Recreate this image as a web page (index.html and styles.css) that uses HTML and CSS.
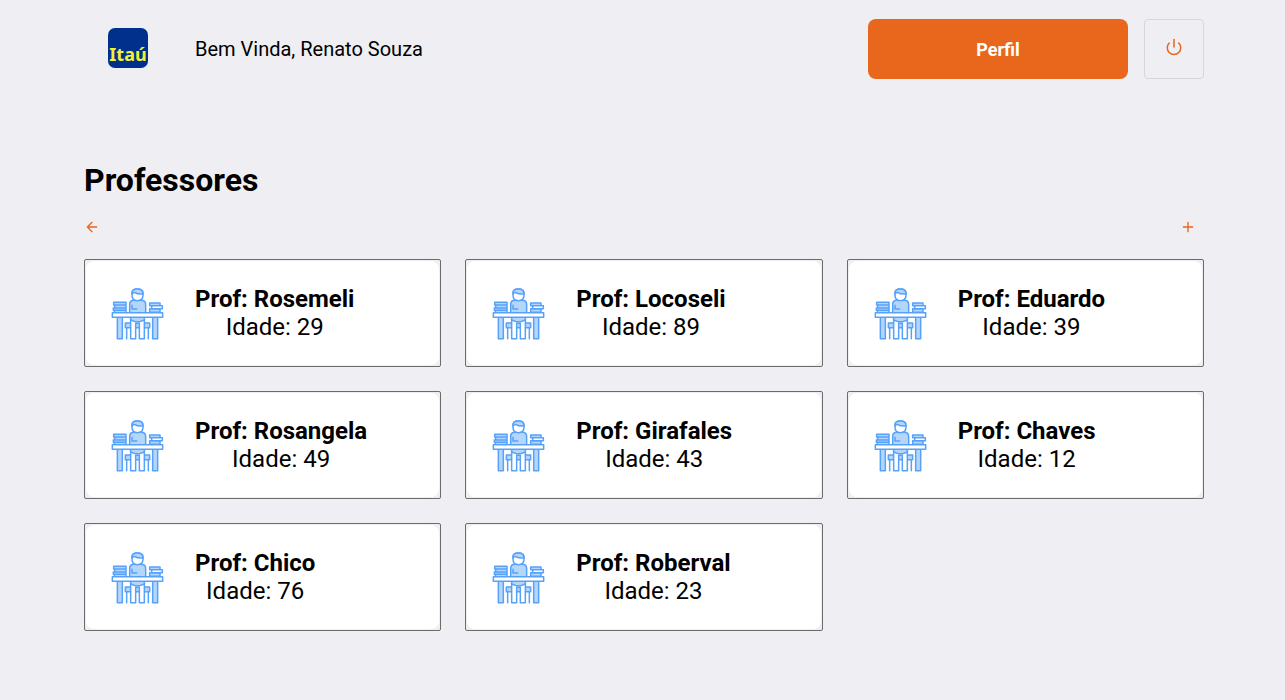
FILE: index.html
```html
<!DOCTYPE html>
<html lang="pt-BR">
<head>
<meta charset="utf-8">
<meta name="viewport" content="width=device-width, initial-scale=1">
<title>Professores</title>
<link rel="stylesheet" href="styles.css">
</head>
<body>
<svg class="sprite" aria-hidden="true">
  <symbol id="desk" viewBox="18 18 162 162">
    <g stroke="#56a2fb" stroke-width="4.5" stroke-linejoin="round" stroke-linecap="round" fill="#b5d6fb">
      <path d="M77 98V74Q77 61 90 61H112Q125 61 125 74V98Z"/>
      <path d="M84 76V87H98" fill="none"/>
      <path d="M84 40Q83 27 100 27Q117 27 117 40V46Q117 62 100 62Q84 62 84 46Z" fill="#fff"/>
      <path d="M84 39Q84 27 100 27Q117 27 117 42Q100 43 93 38Q88 37 84 42Z"/>
      <path d="M29 67H66V75H29ZM32 75H66V84H32ZM28 84H66V91H28ZM31 91H66V98H31Z"/>
      <path d="M137 69H168V77H137ZM137 86H168V97H137Z"/>
      <path d="M143 77H175V86H143Z" fill="#fff"/>
      <path d="M40 111H55V176H40ZM146 111H161V176H146Z"/>
      <path d="M64 129H137V143H64Z"/>
      <path d="M68 143V176M133 143V176" fill="none"/>
      <path d="M80 111H121V176H106V130H95V176H80Z" fill="#fff"/>
      <path d="M80 111H121V120L108 125H93L80 120Z"/>
      <path d="M25 98H176V112H25Z" fill="#fff"/>
    </g>
  </symbol>
</svg>
<div class="page">
  <header class="header">
    <svg class="logo" viewBox="0 0 40 40" role="img" aria-label="Itaú">
      <rect width="40" height="40" rx="7" fill="#00308c"/>
      <text class="logo-text" x="20" y="33" text-anchor="middle">Itaú</text>
    </svg>
    <span class="welcome">Bem Vinda, Renato Souza</span>
    <button class="profile" type="button">Perfil</button>
    <button class="power" type="button" aria-label="Sair">
      <svg width="18" height="18" viewBox="0 0 24 24" class="line-icon"><path d="M18.36 6.64a9 9 0 1 1-12.73 0M12 2v10"/></svg>
    </button>
  </header>
  <main>
    <h1 class="title">Professores</h1>
    <nav class="toolbar">
      <a class="tool" href="#voltar" aria-label="Voltar"><svg width="16" height="16" viewBox="0 0 24 24" class="line-icon"><path d="M19 12H5M12 19l-7-7 7-7"/></svg></a>
      <a class="tool tool-add" href="#novo" aria-label="Adicionar"><svg width="16" height="16" viewBox="0 0 24 24" class="line-icon"><path d="M12 5v14M5 12h14"/></svg></a>
    </nav>
    <div class="grid">
      <button class="card" type="button"><span class="card-body"><svg class="desk"><use href="#desk"/></svg><span class="info"><strong>Prof: Rosemeli</strong><span>Idade: 29</span></span></span></button>
      <button class="card" type="button"><span class="card-body"><svg class="desk"><use href="#desk"/></svg><span class="info"><strong>Prof: Locoseli</strong><span>Idade: 89</span></span></span></button>
      <button class="card" type="button"><span class="card-body"><svg class="desk"><use href="#desk"/></svg><span class="info"><strong>Prof: Eduardo</strong><span>Idade: 39</span></span></span></button>
      <button class="card" type="button"><span class="card-body"><svg class="desk"><use href="#desk"/></svg><span class="info"><strong>Prof: Rosangela</strong><span>Idade: 49</span></span></span></button>
      <button class="card" type="button"><span class="card-body"><svg class="desk"><use href="#desk"/></svg><span class="info"><strong>Prof: Girafales</strong><span>Idade: 43</span></span></span></button>
      <button class="card" type="button"><span class="card-body"><svg class="desk"><use href="#desk"/></svg><span class="info"><strong>Prof: Chaves</strong><span>Idade: 12</span></span></span></button>
      <button class="card" type="button"><span class="card-body"><svg class="desk"><use href="#desk"/></svg><span class="info"><strong>Prof: Chico</strong><span>Idade: 76</span></span></span></button>
      <button class="card" type="button"><span class="card-body"><svg class="desk"><use href="#desk"/></svg><span class="info"><strong>Prof: Roberval</strong><span>Idade: 23</span></span></span></button>
    </div>
  </main>
</div>
</body>
</html>
```
FILE: styles.css
```css
* {
  box-sizing: border-box;
  margin: 0;
  padding: 0;
}

body {
  padding-left: 3px;
  background: #efeef3;
  color: #000;
  font-family: Roboto, sans-serif;
  -webkit-font-smoothing: antialiased;
}

button {
  font: inherit;
  color: inherit;
  cursor: pointer;
}

.sprite {
  display: none;
}

.page {
  max-width: 1120px;
  margin: 0 auto;
  padding: 19px 0 32px;
}

.header {
  display: flex;
  align-items: center;
}

.logo {
  width: 40px;
  height: 40px;
  margin: 0 47px 2px 24px;
}

.logo-text {
  font: 700 18px "Noto Sans", sans-serif;
  fill: #f5f032;
}

.welcome {
  font-size: 20px;
}

.profile {
  width: 260px;
  height: 60px;
  margin-left: auto;
  border: 0;
  border-radius: 8px;
  background: #e9661d;
  color: #fff;
  font-size: 18px;
  font-weight: 700;
}

.power {
  display: flex;
  align-items: center;
  justify-content: center;
  width: 60px;
  height: 60px;
  margin-left: 16px;
  padding-bottom: 4px;
  border: 1px solid #d7d6df;
  border-radius: 4px;
  background: transparent;
}

.line-icon {
  display: block;
  fill: none;
  stroke: #e9661d;
  stroke-width: 2;
  stroke-linecap: round;
  stroke-linejoin: round;
}

.title {
  margin-top: 80px;
  font-size: 32px;
  line-height: 42px;
}

.toolbar {
  display: flex;
  justify-content: space-between;
  margin: 18px 0 24px;
}

.tool-add {
  margin-right: 8px;
}

.grid {
  display: grid;
  grid-template-columns: repeat(3, 1fr);
  gap: 24px;
}

.card {
  padding: 1px;
  border: 1px solid #6b6b6b;
  border-radius: 2px;
  background: #efefef;
}

.card-body {
  display: flex;
  align-items: center;
  min-height: 104px;
  padding: 24px;
  border-radius: 8px;
  background: #fff;
}

.desk {
  width: 54px;
  height: 54px;
  margin-right: 31px;
}

.info {
  display: flex;
  flex-direction: column;
  align-items: center;
  font-size: 24px;
  line-height: 28px;
}
```
